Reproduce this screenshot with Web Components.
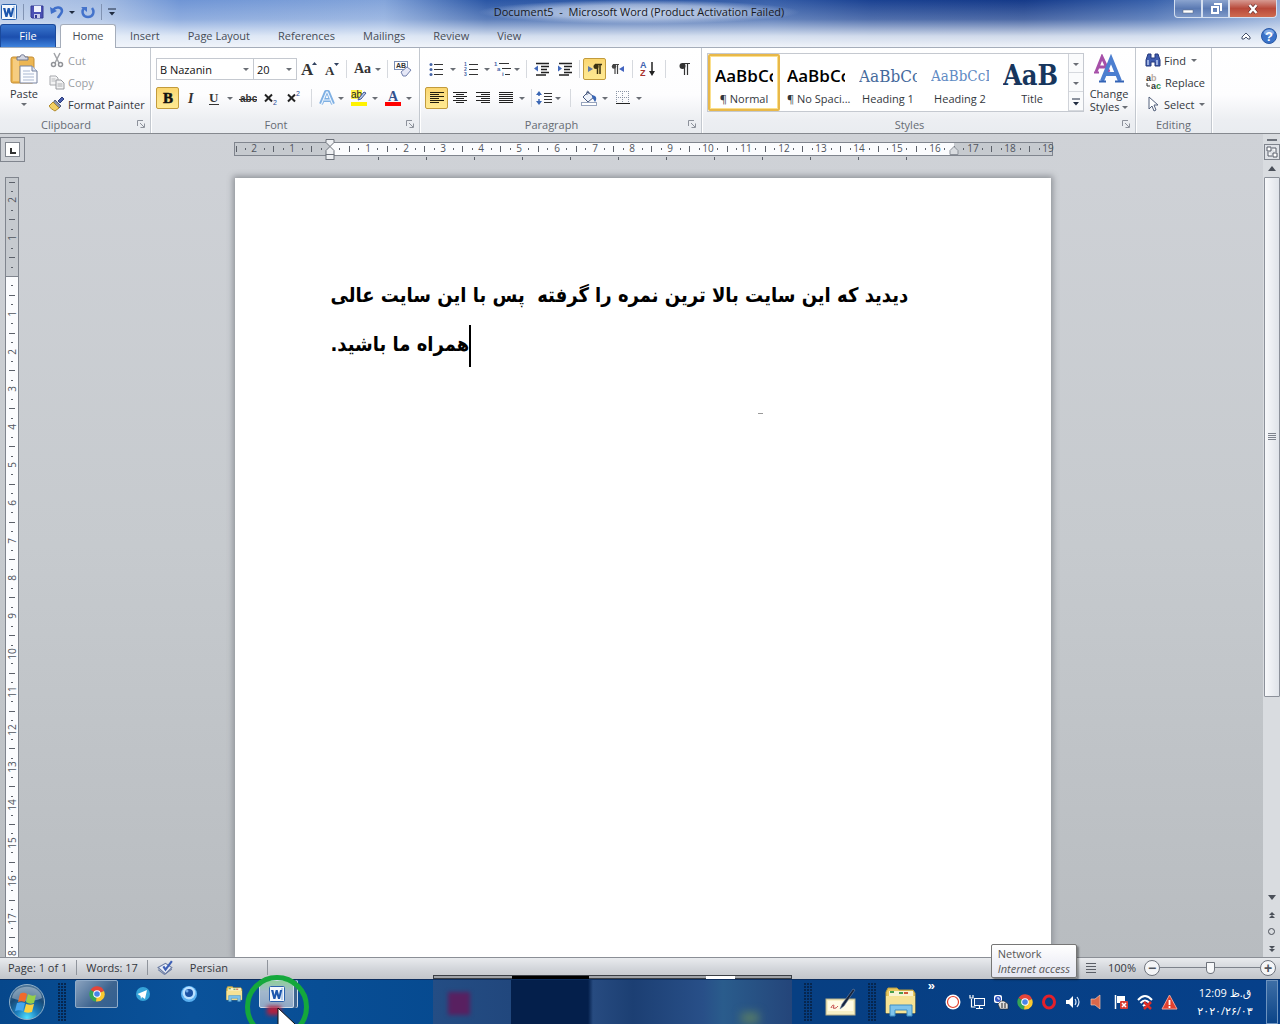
<!DOCTYPE html>
<html lang="en">
<head>
<meta charset="utf-8">
<title>Document5 - Microsoft Word</title>
<style>
  html, body {
    margin: 0;
    height: 100%;
    overflow: hidden;
  }
  body {
    font-family: "Open Sans", "Noto Sans", "DejaVu Sans", sans-serif;
    font-size: 11px;
    color: #33373d;
  }
</style>
</head>
<body>
<word-window></word-window>

<script>
const ICONS = {
  word: [16, 16, `<rect x=".5" y=".5" width="15" height="15" rx="1" fill="#f4f8fd" stroke="#2b62ad"/><rect x="12" y="2" width="2" height="12" fill="#b9cfec"/><path d="M2 4h2.400l1 5 1.300-5h2l1.300 5 1-5h2.200l-2.200 9H9L7.700 8.500 6.400 13h-2z" fill="#1c56ad"/>`],
  save: [14, 14, `<path d="M1 1h12v12H2l-1-1z" fill="#4a50b4" stroke="#343a92"/><rect x="4" y="1" width="7" height="6" fill="#eef1fb"/><rect x="4" y="9" width="6" height="4" fill="#c8cdea"/><rect x="5" y="10" width="2" height="3" fill="#343a92"/>`],
  undo: [14, 14, `<path d="M3 5c3-4 9-3 9 1 0 3-3 4-4 7" fill="none" stroke="#3f6fca" stroke-width="2.500"/><path d="M0 2l1 7 6-3z" fill="#3f6fca"/>`],
  redo: [14, 14, `<path d="M3 3c-3 4-1 9 4 9s7-5 4-9" fill="none" stroke="#4473cb" stroke-width="2.500"/><path d="M0 2h6v5z" fill="#4473cb"/>`],
  more: [8, 8, `<path d="M0 1h8" stroke="#1f2b40" stroke-width="1"/><path d="M1 4h6L4 7.500z" fill="#1f2b40"/>`],
  paste: [28, 30, `<rect x="1" y="3" width="23" height="26" rx="2" fill="#ecb652" stroke="#c58d33"/><rect x="3" y="5" width="6" height="22" fill="#f6cd80"/><path d="M7 6V3h3c0-3 5-3 5 0h3v3z" fill="#d3d6e2" stroke="#6f7690"/><path d="M10 12h12l5 5v12H10z" fill="#fbfcff" stroke="#7683a0"/><path d="M22 12v5h5" fill="#dce4f2" stroke="#7683a0"/><path d="M13 17h7M13 20h11M13 23h11M13 26h11" stroke="#a9b7d0"/>`],
  cut: [16, 16, `<path d="M5 1l5 10M11 1L6 11" stroke="#a2a4a8" stroke-width="1.500"/><circle cx="4.500" cy="12.500" r="2" fill="none" stroke="#909297" stroke-width="1.500"/><circle cx="11.500" cy="12.500" r="2" fill="none" stroke="#909297" stroke-width="1.500"/>`],
  copy: [16, 16, `<path d="M1 2h6l2 2v7H1z" fill="#f3f3f4" stroke="#a7a9ad"/><path d="M2.500 5h4M2.500 7h4" stroke="#b9bbbe"/><path d="M7 6h5l3 3v6H7z" fill="#f3f3f4" stroke="#989a9f"/><path d="M8.500 10h5M8.500 12h5" stroke="#a9abae"/>`],
  painter: [16, 16, `<path d="M9 5l4-4 2 2-4 4z" fill="#4a5fae" stroke="#2c3d7e"/><path d="M6 4l6 6-2 2-6-5z" fill="#8a93a8" stroke="#555e78"/><path d="M4 6l6 6-4 3c-2-1-5-3-6-5z" fill="#f3d064" stroke="#b18a2a"/>`],
  grow: [18, 16, `<text x="1" y="14" font-family="Liberation Serif" font-weight="700" font-size="17" fill="#333">A</text><path d="M12 4l2.500-3L17 4z" fill="#30415f"/>`],
  shrink: [18, 16, `<text x="2" y="14" font-family="Liberation Serif" font-weight="700" font-size="13" fill="#333">A</text><path d="M11 2h5l-2.500 3z" fill="#30415f"/>`],
  changecase: [18, 16, `<text x="1" y="12" font-family="Liberation Serif" font-weight="700" font-size="14" fill="#333">Aa</text>`],
  clear: [18, 18, `<rect x=".5" y="1.500" width="13" height="8" fill="#fff" stroke="#7d8fb5"/><text x="2" y="8" font-family="Liberation Sans" font-weight="700" font-size="7" fill="#333">AB</text><path d="M7 12l6-5 4 3-5 6H9z" fill="#e6e8f7" stroke="#7381ad"/>`],
  bold: [14, 14, `<text x="2" y="12" font-family="Liberation Serif" font-weight="700" font-size="15" fill="#111" stroke="#111" stroke-width=".5">B</text>`],
  italic: [14, 14, `<text x="4" y="12" font-family="Liberation Serif" font-weight="700" font-style="italic" font-size="14" fill="#333">I</text>`],
  underline: [14, 16, `<text x="2" y="12" font-family="Liberation Serif" font-weight="700" font-size="13" fill="#333">U</text><path d="M2 14.500h10" stroke="#333"/>`],
  strike: [18, 14, `<text x="1" y="11" font-family="Liberation Sans" font-weight="700" font-size="10" fill="#333">abc</text><path d="M0 8.500h18" stroke="#333"/>`],
  sub: [16, 16, `<path d="M2 4.500l7 7M9 4.500l-7 7" stroke="#222" stroke-width="2"/><text x="10" y="15" font-family="Liberation Sans" font-size="7" fill="#274b93">2</text>`],
  sup: [16, 16, `<path d="M2 4.500l7 7M9 4.500l-7 7" stroke="#222" stroke-width="2"/><text x="10" y="6" font-family="Liberation Sans" font-size="7" fill="#274b93">2</text>`],
  effects: [16, 16, `<path d="M2 14L7 2h2l5 12M4.500 10h7" fill="none" stroke="#7fb0e3" stroke-width="4" stroke-linejoin="round"/><path d="M2.500 14L7.500 2h1L13.500 14M5 10h6" fill="none" stroke="#eef6ff" stroke-width="1.200"/>`],
  highlight: [18, 18, `<rect x="1" y="1" width="11" height="9" fill="#fff34a"/><text x="1" y="9" font-family="Liberation Sans" font-size="10" fill="#222">ab</text><path d="M9 9l5-6 2 1-5 6-3 1z" fill="#b9c9ec" stroke="#405796"/><rect x="1" y="13" width="16" height="4" fill="#fff200"/>`],
  fontcolor: [18, 18, `<text x="4" y="12" font-family="Liberation Serif" font-weight="700" font-size="14" fill="#33518f">A</text><rect x="1" y="13" width="16" height="4" fill="#f00"/>`],
  bullets: [16, 14, `<g fill="#4565a8"><circle cx="2" cy="2.500" r="1.500"/><circle cx="2" cy="7.500" r="1.500"/><circle cx="2" cy="12.500" r="1.500"/></g><path d="M5 2.500h9M5 7.500h9M5 12.500h9" stroke="#333"/>`],
  numbers: [16, 14, `<g font-family="Liberation Sans" font-weight="700" font-size="5" fill="#4565a8"><text x="1" y="4">1</text><text x="1" y="9">2</text><text x="1" y="14">3</text></g><path d="M6 2.500h9M6 7.500h9M6 12.500h9" stroke="#333"/>`],
  levels: [17, 16, `<g font-family="Liberation Sans" font-weight="700" font-size="6" fill="#4565a8"><text x="0" y="5">1</text><text x="3" y="10">a</text><text x="8" y="15">i</text></g><path d="M5 2.500h10M8 7.500h9M11 13.500h5" stroke="#333"/>`],
  outdent: [16, 14, `<path d="M2 1.500h13M7 4.500h8M7 7.500h6M7 10.500h8M2 13h10" stroke="#222" stroke-width="1.500"/><path d="M0 6.500l4-3v6z" fill="#4269bb"/>`],
  indent: [16, 14, `<path d="M2 1.500h13M7 4.500h8M7 7.500h6M7 10.500h8M2 13h10" stroke="#222" stroke-width="1.500"/><path d="M5 6.500l-4-3v6z" fill="#4269bb"/>`],
  ltr: [14, 12, `<path d="M0 3v6l5-3z" fill="#5c77a6"/><path d="M9.500 1v10M12 1v10M7 1.500h7" fill="none" stroke="#3b3110" stroke-width="1.500"/><circle cx="8" cy="3.500" r="2.500" fill="#3b3110"/>`],
  rtl: [14, 12, `<path d="M13 3v6L8 6z" fill="#4465c0"/><path d="M4 1v10M6.500 1v10M2 1.500h6" fill="none" stroke="#444" stroke-width="1.200"/><circle cx="3" cy="3.500" r="2.200" fill="#444"/>`],
  sort: [16, 16, `<g font-family="Liberation Sans" font-weight="700" font-size="9"><text x="0" y="7" fill="#3d62b0">A</text><text x="0" y="15" fill="#a8322d">Z</text></g><path d="M12 1v12" stroke="#222" stroke-width="1.500"/><path d="M9 10h6l-3 5z" fill="#222"/>`],
  pilcrow: [12, 14, `<path d="M6.500 1v12M9.500 1v12M4 1.500h8" fill="none" stroke="#333" stroke-width="1.200"/><circle cx="4.500" cy="4" r="3" fill="#333"/>`],
  left: [14, 12, `<path d="M0 .5h14M0 2.500h9M0 4.500h14M0 6.500h9M0 8.500h14M0 10.500h9" stroke="#221d0c"/>`],
  center: [14, 12, `<path d="M0 .5h14M3 2.500h8M0 4.500h14M3 6.500h8M0 8.500h14M3 10.500h8" stroke="#222"/>`],
  right: [14, 12, `<path d="M0 .5h14M5 2.500h9M0 4.500h14M5 6.500h9M0 8.500h14M5 10.500h9" stroke="#222"/>`],
  justify: [14, 12, `<path d="M0 .5h14M0 2.500h14M0 4.500h14M0 6.500h14M0 8.500h14M0 10.500h14" stroke="#222"/>`],
  spacing: [16, 16, `<path d="M3 3v10" stroke="#3a66b4" stroke-width="1.500" stroke-dasharray="3 3"/><path d="M0 5l3-4 3 4zM0 11l3 4 3-4z" fill="#3a66b4"/><path d="M8 3.500h8M8 6.500h8M8 9.500h8M8 12.500h8" stroke="#333"/>`],
  shading: [18, 16, `<path d="M3 7l5-5 6 5-6 5z" fill="#eef2fa" stroke="#48597e"/><path d="M7 5c-1-5 2-5 2-1" fill="none" stroke="#48597e"/><path d="M12 5c5 1 5 4 3 7l-3-5z" fill="#3a66b4"/><rect x="1.500" y="12.500" width="15" height="3" fill="#fff" stroke="#97a4bd"/>`],
  borders: [14, 14, `<path d="M.5 0v13M6.500 0v13M12.500 0v13M0 .5h13M0 6.500h13" stroke="#8b95a5" stroke-dasharray="1 1"/><path d="M0 12.500h14" stroke="#222"/>`],
  styles: [32, 30, `<path d="M3 18L9 3l7 15M5 13h9" fill="none" stroke="#a650a8" stroke-width="3"/><path d="M1 18.500h5" stroke="#a650a8" stroke-width="2"/><path d="M9 27l9-22 9 22M12 20h12" fill="none" stroke="#4c7fd0" stroke-width="4"/><path d="M6 27.500h7M22 27.500h9" stroke="#3363b5" stroke-width="2"/>`],
  find: [16, 14, `<path d="M3 1h3v4h4V1h3l2 6v6h-5V9H6v4H1V7z" fill="#3f5cae" stroke="#25397d"/><path d="M3 7v5M12 7v5" stroke="#b9c9f0" stroke-width="1.500"/>`],
  replace: [17, 16, `<g font-family="Liberation Sans" font-weight="700" font-size="9"><text x="1" y="7" fill="#333">a</text><text x="6" y="7" fill="#b9a9a0">b</text><text x="6" y="15" fill="#333">a</text><text x="11" y="15" fill="#2a8b3c">c</text></g><path d="M2 9v3h3" fill="none" stroke="#333"/>`],
  select: [12, 16, `<path d="M2 1v12l3-3 2 5 2-1-2-5h4z" fill="#fff" stroke="#53617c"/>`],
  launcher: [8, 8, `<path d="M.5 6V.5H6" fill="none" stroke="#8c919b"/><path d="M3 3l4 4M7.500 3.500v4h-4" fill="none" stroke="#8c919b"/>`],
  help: [16, 16, `<circle cx="8" cy="8" r="7.500" fill="#3a73c9" stroke="#2a59a5"/><ellipse cx="8" cy="4.500" rx="5" ry="3" fill="#82aae4"/><text x="4" y="13" font-family="Liberation Sans" font-weight="700" font-size="13" fill="#fff">?</text>`],
  collapse: [10, 8, `<path d="M1 5l4-4 4 4v2H7L5 5 3 7H1z" fill="#fff" stroke="#44506a"/>`],
  minimize: [12, 12, `<rect x="1" y="7" width="10" height="3" fill="#fff" stroke="#56647f" stroke-width=".5"/>`],
  restore: [12, 12, `<path d="M4 1h7v7M2 4h6v6H2z" fill="none" stroke="#fff" stroke-width="2"/>`],
  close: [12, 12, `<path d="M2.500 2l7 8M9.500 2l-7 8" stroke="#5f2a2a" stroke-width="3.500"/><path d="M2.500 2l7 8M9.500 2l-7 8" stroke="#fff" stroke-width="2.500"/>`],
  proof: [16, 14, `<path d="M1 7l7-4 6 4-6 6z" fill="#e9eef8" stroke="#6c7da4"/><path d="M1 9l6 4.500 7-5" fill="none" stroke="#6c7da4"/><path d="M6 6l2 3 6-8" fill="none" stroke="#3d5fb5" stroke-width="2"/>`],
  outline: [10, 10, `<path d="M0 .5h10M0 3.500h10M0 6.500h10M0 9.500h10" stroke="#5a5e66"/>`],
  swap: [16, 16, `<rect x=".5" y=".5" width="15" height="15" fill="#dfe2e7" stroke="#7e838c"/><path d="M3 3h4v4H3zM9 9h4v4H9zM8 4h4v4M4 8v4h4" fill="#fff" stroke="#555b66"/>`],
  start: [38, 38, `<defs><radialGradient id="o" cx=".5" cy=".95" r=".9"><stop offset="0" stop-color="#4fe0ff"/><stop offset=".35" stop-color="#1c7fbe"/><stop offset=".7" stop-color="#174a78"/><stop offset="1" stop-color="#4c7496"/></radialGradient></defs><circle cx="19" cy="19" r="17.500" fill="url(#o)" stroke="#8fb0c9"/><path d="M4 15C6 0 32 0 34 15 24 20 12 18 4 15z" fill="#fff" opacity=".35"/><path d="M12 11c3-2 5-1 7 0l-2 8c-3-1-5-1-7 0z" fill="#ef6a2c"/><path d="M20 11c3 2 5 2 8 1l-2 8c-3 1-5 1-8-1z" fill="#95cf4b"/><path d="M9 20c3-1 5-1 8 0l-2 8c-3-1-5-1-8 0z" fill="#46a5ee"/><path d="M18 21c3 1 5 1 8 0l-2 8c-3 1-5 1-8 0z" fill="#fbd141"/>`],
  chrome: [16, 16, `<path d="M8 8L1.500 4A7.500 7.500 0 0 1 15 5z" fill="#e5453a"/><path d="M8 8L1.500 4A7.500 7.500 0 0 0 7 15.500z" fill="#35a455"/><path d="M8 8l7-3A7.500 7.500 0 0 1 7 15.500z" fill="#fbc92f"/><circle cx="8" cy="8" r="3.800" fill="#fff"/><circle cx="8" cy="8" r="2.800" fill="#4784e8"/>`],
  telegram: [16, 16, `<circle cx="8" cy="8" r="7" fill="#35a3d8"/><path d="M2.500 8L12 4l-2 9-3-2-1 2-.5-3z" fill="#fff"/>`],
  ball: [18, 18, `<circle cx="9" cy="9" r="8" fill="#5ab0f0"/><circle cx="9" cy="8" r="6.500" fill="#b9e0ff"/><circle cx="9" cy="8" r="4" fill="#1b52a4"/><circle cx="7" cy="6" r="1.500" fill="#6fa8e6"/>`],
  folder: [32, 30, `<path d="M1 5l2-4h9l2 2h14l2 3v20H1z" fill="#e8c85e" stroke="#b99a3f"/><path d="M4 4h24v5H4z" fill="#f9f3d2"/><path d="M5 5h4M14 6h4" stroke="#4aa04d" stroke-width="2"/><path d="M19 6h4" stroke="#d05a3a" stroke-width="2"/><path d="M1 9h29v17H1z" fill="#f6e294"/><path d="M5 29V18h22v11h-5v-6H10v6z" fill="#7fc4ec" stroke="#3f8ec3"/>`],
  tablet: [32, 28, `<rect x="1" y="11" width="29" height="16" fill="#f7f0c6" stroke="#b9b188"/><rect x="3" y="13" width="25" height="10" fill="#fffbe4"/><path d="M6 20c2-5 4-3 2 0 3 1 4-1 5-2" fill="none" stroke="#c04040"/><path d="M15 21l2-5L28 1l2 1-11 16z" fill="#16243c" stroke="#6b86ab" stroke-width=".6"/>`],
  record: [16, 16, `<circle cx="8" cy="8" r="7.500" fill="#fff"/><circle cx="8" cy="8" r="5.500" fill="#fff" stroke="#e2412c" stroke-width="1.200"/>`],
  network: [16, 16, `<rect x="5.500" y="4.500" width="10" height="7" fill="#17498f" stroke="#fff"/><path d="M7 14.500h7M10.500 12v2M2.500 5v8h4M1 1v3h3V1" fill="none" stroke="#fff" stroke-width="1.200"/>`],
  idm: [16, 16, `<rect x="1" y="1" width="8" height="8" rx="2" fill="#fff"/><circle cx="5" cy="5" r="3" fill="#3154c2"/><path d="M5 3v2h2" fill="none" stroke="#fff"/><path d="M5 10l3-3h3l4 3v5H7z" fill="#e2e2e2" stroke="#222" stroke-width=".6"/><path d="M9 9v5M12 9v5" stroke="#222"/>`],
  opera: [16, 16, `<ellipse cx="8" cy="8" rx="5.500" ry="6" fill="none" stroke="#e3202b" stroke-width="3"/>`],
  sound: [16, 16, `<path d="M1 6h3l4-4v12l-4-4H1z" fill="#fff"/><path d="M10 5q2 3 0 6M12 3q4 5 0 10" fill="none" stroke="#dce9fa" stroke-width="1.200"/>`],
  speaker: [16, 16, `<path d="M2 5h4l5-4v14l-5-4H2z" fill="#d9684b" stroke="#f0c3b0" stroke-width=".7"/>`],
  flag: [16, 16, `<path d="M2.500 1v14" stroke="#fff" stroke-width="1.500"/><path d="M4 2h8v7H4z" fill="#fff"/><rect x="7" y="7" width="8" height="8" rx="1" fill="#d93c32"/><path d="M9 9l4 4M13 9l-4 4" stroke="#fff" stroke-width="1.500"/>`],
  wifi: [16, 16, `<path d="M1 6q7-8 14 0M3.500 9q4.500-5 9 0M6 12q2-2 4 0" fill="none" stroke="#fff" stroke-width="2"/><path d="M7 8l7 7M14 8l-7 7" stroke="#e02d25" stroke-width="2.500"/>`],
  warning: [17, 16, `<path d="M8.500 1L16 15H1z" fill="#e2412f" stroke="#f1a094"/><path d="M8.500 6v5M8.500 12v2" stroke="#fff" stroke-width="1.800"/>`]
};

class uiIcon extends HTMLElement {
  constructor() {
    super();
    this.attachShadow({ mode: "open" });
    const [w, h, body] = ICONS[this.getAttribute("name")];
    const size = Number(this.getAttribute("width")) || w;
    this.shadowRoot.innerHTML = `
      <style>
        :host { display: inline-flex; flex: none; }
        svg { display: block; }
      </style>
      <svg width="${size}" height="${Math.round((h * size) / w)}" viewBox="0 0 ${w} ${h}" aria-hidden="true">${body}</svg>
    `;
  }
}
customElements.define("ui-icon", uiIcon);

// one ribbon button; "menu" adds the small drop-down arrow
class toolButton extends HTMLElement {
  constructor() {
    super();
    this.attachShadow({ mode: "open" });
    const icon = this.getAttribute("icon");
    this.shadowRoot.innerHTML = `
      <style>
        :host { display: flex; flex: none; }
        button {
          display: flex; align-items: center; gap: 3px;
          height: 22px; padding: 0; border: 1px solid transparent; border-radius: 2px;
          background: none; font: inherit; color: inherit; white-space: nowrap; box-sizing: border-box;
        }
        .pic { display: flex; justify-content: center; min-width: 21px; }
        :host([label]) .pic { min-width: 16px; }
        :host([narrow]) .pic { min-width: 16px; }
        :host([on]) button {
          border-color: #c29b3c;
          background: linear-gradient(#fbd66f, #fce28a 50%, #ffe98f);
        }
        :host([menu]) button { gap: 1px; }
        :host([menu][label]) button { gap: 3px; }
        :host([off]) { color: #9a9da2; }
        i { display: block; margin: 0 2px; border: 3px solid transparent; border-top-color: #6a6e75; border-bottom: 0; }
      </style>
      <button type="button" aria-label="${this.getAttribute("label") || icon}">
        <span class="pic"><ui-icon name="${icon}"></ui-icon></span><slot></slot>${this.hasAttribute("menu") ? "<i></i>" : ""}
      </button>
    `;
  }
}
customElements.define("tool-button", toolButton);

class toolSep extends HTMLElement {
  constructor() {
    super();
    this.attachShadow({ mode: "open" });
    this.shadowRoot.innerHTML = `
      <style>
        :host { display: block; flex: none; width: 1px; height: 18px; margin: 2px 3px; background: #d6d9de; }
        :host([wide]) { margin: 2px 6px; }
      </style>
    `;
  }
}
customElements.define("tool-sep", toolSep);

class ribbonGroup extends HTMLElement {
  constructor() {
    super();
    this.attachShadow({ mode: "open" });
    const title = this.getAttribute("name");
    this.shadowRoot.innerHTML = `
      <style>
        :host {
          display: flex; flex-direction: column; flex: none; box-sizing: border-box;
          height: 85px; border-right: 1px solid #c3c8cf; box-shadow: 1px 0 #fff;
        }
        .body { flex: 1; display: flex; min-height: 0; }
        footer {
          display: flex; align-items: center; height: 18px; padding: 0 5px; color: #666b73;
        }
        span { flex: 1; text-align: center; }
        :host(:not([plain])) span { padding-right: 10px; }
      </style>
      <div class="body"><slot></slot></div>
      <footer><span>${title}</span>${this.hasAttribute("plain") ? "" : '<ui-icon name="launcher"></ui-icon>'}</footer>
    `;
  }
}
customElements.define("ribbon-group", ribbonGroup);

class styleCard extends HTMLElement {
  constructor() {
    super();
    this.attachShadow({ mode: "open" });
    this.shadowRoot.innerHTML = `
      <style>
        :host { display: block; flex: none; width: 72px; }
        button {
          width: 100%; height: 57px; box-sizing: border-box; padding: 4px 5px 0; border: 2px solid transparent;
          background: none; font: inherit; color: inherit; text-align: center;
        }
        :host([on]) button { border-color: #e8b84a; box-shadow: inset 0 0 0 1px #fbe08d; border-radius: 2px; }
        .sample {
          display: block; height: 28px; line-height: 28px; overflow: hidden; white-space: nowrap; text-align: left;
          font-family: var(--face, inherit); font-size: var(--size, 17px); font-weight: var(--weight, 600);
          color: var(--ink, #000);
        }
        .name { display: block; line-height: 18px; white-space: nowrap; }
      </style>
      <button type="button"><span class="sample">${this.getAttribute("sample")}</span><span class="name"><slot></slot></span></button>
    `;
  }
}
customElements.define("style-card", styleCard);

class titleBar extends HTMLElement {
  constructor() {
    super();
    this.attachShadow({ mode: "open" });
    this.shadowRoot.innerHTML = `
      <style>
        :host { display: flex; justify-content: space-between; height: 24px; }
        button { padding: 0; border: 0; background: none; display: flex; align-items: center; justify-content: center; }
        .side { flex: 1; display: flex; align-items: center; gap: 6px; padding-left: 1px; }
        .line { width: 1px; height: 16px; background: #8193b3; }
        .tight { margin-left: -1px; border: 3px solid transparent; border-top-color: #1f2b40; border-bottom: 0; }
        h1 {
          margin: 0; padding: 0 16px; font: inherit; line-height: 24px; color: #17191d; white-space: pre;
          background: radial-gradient(closest-side, rgba(235,242,252,.75), rgba(235,242,252,.5) 60%, rgba(235,242,252,0));
        }
        .win { flex: 1; display: flex; justify-content: flex-end; align-items: flex-start; padding-right: 3px; }
        .win button { height: 18px; width: 27px; border: 1px solid #d4dff0; border-top: 0; background: linear-gradient(#8ba4cf, #5b7ab3 50%, #7e99c8); box-sizing: border-box; }
        .win button:first-child { width: 28px; border-radius: 0 0 0 4px; }
        .win button:last-child { width: 48px; border-radius: 0 0 4px 0; background: linear-gradient(#d79a92, #b8493a 50%, #cf6b50); }
      </style>
      <div class="side">
        <ui-icon name="word"></ui-icon><span class="line"></span>
        <button aria-label="Save"><ui-icon name="save"></ui-icon></button>
        <button aria-label="Undo"><ui-icon name="undo"></ui-icon></button><span class="tight"></span>
        <button aria-label="Redo"><ui-icon name="redo"></ui-icon></button><span class="line"></span>
        <button aria-label="Customize"><ui-icon name="more"></ui-icon></button>
      </div>
      <h1>Document5  -  Microsoft Word (Product Activation Failed)</h1>
      <div class="win">
        <button aria-label="Minimize"><ui-icon name="minimize"></ui-icon></button>
        <button aria-label="Restore"><ui-icon name="restore"></ui-icon></button>
        <button aria-label="Close"><ui-icon name="close"></ui-icon></button>
      </div>
    `;
  }
}
customElements.define("title-bar", titleBar);

class ribbonTabs extends HTMLElement {
  constructor() {
    super();
    this.attachShadow({ mode: "open" });
    const tabs = ["Insert", "Page Layout", "References", "Mailings", "Review", "View"];
    this.shadowRoot.innerHTML = `
      <style>
        :host { display: flex; align-items: flex-end; height: 24px; border-bottom: 1px solid #a5adba; box-sizing: border-box; }
        button { height: 23px; padding: 0 14px; border: 0; background: none; font: inherit; color: #464c56; white-space: nowrap; }
        .file {
          width: 56px; padding: 0 0 1px; margin-right: 4px; color: #fff; border: 1px solid #1b4a9c; border-bottom: 0;
          border-radius: 3px 3px 0 0; background: linear-gradient(#3a76cd, #1c4fae 55%, #3f83dd);
        }
        .home {
          width: 56px; padding: 0 0 2px; height: 24px; margin-bottom: -1px; border: 1px solid #a5adba; border-bottom: 0;
          border-radius: 3px 3px 0 0; background: #fff;
        }
        .end { margin-left: auto; display: flex; align-items: center; align-self: center; gap: 10px; padding-right: 3px; }
        .end button { padding: 0; height: 16px; }
      </style>
      <button class="file">File</button><button class="home">Home</button>
      ${tabs.map((t) => `<button>${t}</button>`).join("")}
      <div class="end">
        <button aria-label="Minimize the Ribbon"><ui-icon name="collapse"></ui-icon></button>
        <button aria-label="Help"><ui-icon name="help"></ui-icon></button>
      </div>
    `;
  }
}
customElements.define("ribbon-tabs", ribbonTabs);

class wordRibbon extends HTMLElement {
  constructor() {
    super();
    this.attachShadow({ mode: "open" });
    this.shadowRoot.innerHTML = `
      <style>
        :host {
          display: flex; height: 85px; border-bottom: 1px solid #85898f;
          background: linear-gradient(#fff, #fdfdfe 55%, #eceef2 85%, #e9ecf0);
        }
        .clip { width: 151px; }
        .font { width: 269px; }
        .para { width: 282px; }
        .sty { width: 434px; }
        .edit { width: 76px; }
        .big {
          display: flex; flex-direction: column; align-items: center; gap: 3px; padding: 0; border: 0;
          background: none; font: inherit; color: inherit; line-height: 13px;
        }
        .paste { width: 48px; padding-top: 6px; }
        .change { width: 50px; padding-top: 6px; }
        .big b { font-weight: 400; }
        .caret { display: inline-block; vertical-align: 2px; border: 3px solid transparent; border-top-color: #6a6e75; border-bottom: 0; }
        .stack { display: flex; flex-direction: column; padding-top: 1px; }
        .edit .stack { padding-left: 8px; }
        .rows { display: flex; flex-direction: column; gap: 7px; padding: 10px 0 0 5px; }
        .row { display: flex; }
        select {
          appearance: none; height: 22px; box-sizing: border-box; margin: 0; padding: 0 0 0 3px; border: 1px solid #c5c9d0;
          border-radius: 0; font: inherit; color: #111; width: 98px; background: #fff;
        }
        .combo { position: relative; display: flex; }
        .combo .caret { position: absolute; right: 5px; top: 10px; }
        .combo + .combo select { width: 44px; margin-left: -1px; }
        .gallery { display: flex; height: 59px; margin: 5px 0 0 5px; border: 1px solid #c5c9d0; background: #fff; box-sizing: border-box; }
        .scroll { display: flex; flex-direction: column; border-left: 1px solid #d0d3d9; width: 14px; }
        .scroll button { flex: 1; padding: 0; border: 0; border-bottom: 1px solid #d6d9de; background: #fafbfc; }
      </style>

      <ribbon-group class="clip" name="Clipboard">
        <button class="big paste"><ui-icon name="paste"></ui-icon><b>Paste</b><span class="caret"></span></button>
        <div class="stack">
          <tool-button icon="cut" label="Cut" off>Cut</tool-button>
          <tool-button icon="copy" label="Copy" off>Copy</tool-button>
          <tool-button icon="painter" label="Format Painter">Format Painter</tool-button>
        </div>
      </ribbon-group>

      <ribbon-group class="font" name="Font">
        <div class="rows">
          <div class="row">
            <span class="combo"><select aria-label="Font"><option>B Nazanin</option></select><span class="caret"></span></span>
            <span class="combo"><select aria-label="Font size"><option>20</option></select><span class="caret"></span></span>
            <tool-button icon="grow"></tool-button><tool-button icon="shrink"></tool-button><tool-sep></tool-sep>
            <tool-button icon="changecase" menu></tool-button><tool-sep></tool-sep>
            <tool-button icon="clear"></tool-button>
          </div>
          <div class="row">
            <tool-button icon="bold" on></tool-button><tool-button icon="italic"></tool-button>
            <tool-button icon="underline" menu></tool-button><tool-button icon="strike"></tool-button>
            <tool-button icon="sub"></tool-button><tool-button icon="sup"></tool-button><tool-sep wide></tool-sep>
            <tool-button icon="effects" menu narrow></tool-button><tool-button icon="highlight" menu></tool-button>
            <tool-button icon="fontcolor" menu></tool-button>
          </div>
        </div>
      </ribbon-group>

      <ribbon-group class="para" name="Paragraph">
        <div class="rows">
          <div class="row">
            <tool-button icon="bullets" menu></tool-button><tool-button icon="numbers" menu></tool-button>
            <tool-button icon="levels" menu narrow></tool-button><tool-sep></tool-sep>
            <tool-button icon="outdent"></tool-button><tool-button icon="indent"></tool-button><tool-sep></tool-sep>
            <tool-button icon="ltr" on></tool-button><tool-button icon="rtl"></tool-button><tool-sep></tool-sep>
            <tool-button icon="sort"></tool-button><tool-sep wide></tool-sep><tool-button icon="pilcrow"></tool-button>
          </div>
          <div class="row">
            <tool-button icon="left" on></tool-button><tool-button icon="center"></tool-button>
            <tool-button icon="right"></tool-button><tool-button icon="justify" menu></tool-button><tool-sep></tool-sep>
            <tool-button icon="spacing" menu narrow></tool-button><tool-sep wide></tool-sep>
            <tool-button icon="shading" menu></tool-button><tool-button icon="borders" menu></tool-button>
          </div>
        </div>
      </ribbon-group>

      <ribbon-group class="sty" name="Styles">
        <div class="gallery">
          <style-card sample="AaBbCc" on>¶ Normal</style-card>
          <style-card sample="AaBbCc">¶ No Spaci...</style-card>
          <style-card sample="AaBbCc" style="--face: 'DejaVu Serif Condensed', 'DejaVu Serif', serif; --weight: 400; --ink: #456a9c">Heading 1</style-card>
          <style-card sample="AaBbCcI" style="--face: 'DejaVu Serif Condensed', 'DejaVu Serif', serif; --weight: 400; --size: 15px; --ink: #5f8bc4">Heading 2</style-card>
          <style-card sample="AaB" style="--face: 'DejaVu Serif Condensed', 'DejaVu Serif', serif; --weight: 700; --size: 27px; --ink: #17365d">Title</style-card>
          <div class="scroll">
            <button aria-label="Up"><span class="caret"></span></button>
            <button aria-label="Down"><span class="caret"></span></button>
            <button aria-label="More"><ui-icon name="more"></ui-icon></button>
          </div>
        </div>
        <button class="big change"><ui-icon name="styles"></ui-icon><b>Change<br>Styles <span class="caret"></span></b></button>
      </ribbon-group>

      <ribbon-group class="edit" name="Editing" plain>
        <div class="stack">
          <tool-button icon="find" label="Find" menu>Find</tool-button>
          <tool-button icon="replace" label="Replace">Replace</tool-button>
          <tool-button icon="select" label="Select" menu>Select</tool-button>
        </div>
      </ribbon-group>
    `;
  }
}
customElements.define("word-ribbon", wordRibbon);

// centimetre ruler, drawn along x or, with "vertical", down the window
class wordRuler extends HTMLElement {
  constructor() {
    super();
    this.attachShadow({ mode: "open" });
    const vertical = this.hasAttribute("vertical");
    const zero = Number(this.getAttribute("zero"));
    const end = Number(this.getAttribute("end"));
    const length = vertical ? Math.max(window.innerHeight - 244, 100) : Number(this.getAttribute("length"));
    const quarter = 96 / 2.54 / 4;
    let marks = "";
    for (let q = -Math.floor(zero / quarter); zero + q * quarter < length; q++) {
      const p = Math.round(zero + q * quarter);
      if (q === 0) continue;
      const n = Math.abs(q / 4);
      const spot = (a, b) => (vertical ? `${b},${a}` : `${a},${b}`);
      if (q % 4 === 0) {
        const at = vertical ? `x="7" y="${p}" transform="rotate(-90 7 ${p})" dy="4"` : `x="${p}" y="10"`;
        marks += `<text ${at} text-anchor="middle">${n}</text>`;
      } else {
        const half = q % 2 === 0 ? 3 : 1;
        marks += `<path d="M${spot(p + 0.5, 7 - half)}L${spot(p + 0.5, 7 + half)}" stroke="#5c616a"/>`;
      }
    }
    const w = vertical ? 14 : length;
    const h = vertical ? length : 14;
    const white = vertical
      ? `<rect x="1" y="${zero + 1}" width="12" height="${length - zero}" fill="#fbfcfe"/><path d="M0 ${zero}.5h14" stroke="#80858e"/>`
      : `<rect x="${zero}" y="1" width="${end - zero}" height="12" fill="#fbfcfe"/>`;
    let extras = "";
    if (!vertical) {
      for (let x = zero + 48; x < end; x += 48) extras += `<path d="M${x}.5 15v3" stroke="#5c616a"/>`;
      extras += `
        <path d="M${zero - 4} -2.500h8v3l-4 4-4-4zM${zero - 4} 12.500v-4l4-4 4 4v4z" fill="#eef0f3" stroke="#6d727b"/>
        <rect x="${zero - 4}" y="12.500" width="8" height="5" fill="#eef0f3" stroke="#6d727b"/>
        <path d="M${end - 4} 12.500v-4l4-4 4 4v4z" fill="#d9dce0" stroke="#8d929a"/>`;
    }
    this.shadowRoot.innerHTML = `
      <style>
        :host { display: block; overflow: ${vertical ? "hidden" : "visible"}; }
        svg { display: block; overflow: visible; }
        text { font-size: 10px; fill: #4f545d; }
      </style>
      <svg width="${w}" height="${h}">
        <rect x=".5" y=".5" width="${w - 1}" height="${h - 1}" fill="#c6cacf" stroke="#80858e"/>
        ${white}${marks}${extras}
      </svg>
    `;
  }
}
customElements.define("word-ruler", wordRuler);

class scrollRail extends HTMLElement {
  constructor() {
    super();
    this.attachShadow({ mode: "open" });
    this.shadowRoot.innerHTML = `
      <style>
        :host { display: flex; flex-direction: column; align-items: center; background: #d9dce0; padding-top: 5px; box-sizing: border-box; }
        .split { width: 10px; height: 2px; background: #6d727b; margin-bottom: 2px; }
        button { padding: 0; border: 0; background: none; width: 16px; height: 17px; display: flex; flex-direction: column; align-items: center; justify-content: center; }
        .up { border: 4px solid transparent; border-bottom: 5px solid #4b5059; border-top: 0; }
        .down { border: 4px solid transparent; border-top: 5px solid #4b5059; border-bottom: 0; }
        .small { border-left-width: 3px; border-right-width: 3px; border-top-width: 0; border-bottom-width: 3px; }
        .small.down { border-top-width: 3px; border-bottom-width: 0; }
        .ball { width: 5px; height: 5px; border: 1px solid #4b5059; border-radius: 50%; }
        .track { flex: 1; width: 16px; }
        .thumb {
          height: 73%; box-sizing: border-box; border: 1px solid #8c919a; border-radius: 1px;
          background: linear-gradient(90deg, #f8f9fb, #dfe3e9);
          display: flex; align-items: center; justify-content: center;
        }
        .thumb::before { content: ""; width: 8px; height: 7px; background: repeating-linear-gradient(#7d828c 0 1px, transparent 1px 2px); }
      </style>
      <span class="split"></span>
      <button aria-label="View Ruler"><ui-icon name="swap"></ui-icon></button>
      <button aria-label="Scroll up"><span class="up"></span></button>
      <div class="track"><div class="thumb"></div></div>
      <button aria-label="Scroll down"><span class="down"></span></button>
      <button aria-label="Previous page"><span class="up small"></span><span class="up small"></span></button>
      <button aria-label="Browse"><span class="ball"></span></button>
      <button aria-label="Next page"><span class="down small"></span><span class="down small"></span></button>
    `;
  }
}
customElements.define("scroll-rail", scrollRail);

class wordWorkspace extends HTMLElement {
  constructor() {
    super();
    this.attachShadow({ mode: "open" });
    this.shadowRoot.innerHTML = `
      <style>
        :host {
          display: grid; grid-template: 43px minmax(0, 1fr) / 26px minmax(0, 1fr) 17px; overflow: hidden;
          background: linear-gradient(#cfd2d7, #c6cace 50%, #b8bcc0);
        }
        .tab { width: 25px; height: 25px; margin-top: 3px; box-sizing: border-box; border: 1px solid #80858e; padding: 4px; }
        .tab button { display: block; width: 15px; height: 15px; padding: 0; border: 1px solid #80858e; background: #fff; }
        .tab button::before { content: ""; display: block; width: 4px; height: 4px; margin: 2px 0 0 4px; border: solid #333; border-width: 0 0 2px 2px; }
        .top { justify-self: center; width: 819px; margin: 8px 3px 0 0; }
        scroll-rail { grid-column: 3; grid-row: 1 / 3; }
        .side { margin-left: 5px; }
        main {
          width: 816px; box-sizing: border-box; padding: 93px 96px 0; justify-self: center; margin: 1px 4px 0 0;
          background: #fff; box-shadow: 0 0 6px 2px #8f9398;
        }
        p {
          margin: 0; text-align: left; font-family: "DejaVu Sans Condensed", "DejaVu Sans", sans-serif; font-weight: 700;
          font-size: 20px; line-height: 49px; color: #000; white-space: pre;
        }
        .caret { display: inline-block; width: 2px; height: 42px; background: #000; vertical-align: middle; }
        .speck { margin: 44px 0 0 427px; width: 5px; height: 1px; background: #999; }
      </style>
      <div class="tab"><button aria-label="Left tab"></button></div>
      <word-ruler class="top" zero="96" end="720" length="819"></word-ruler>
      <scroll-rail></scroll-rail>
      <word-ruler class="side" vertical zero="99"></word-ruler>
      <main>
        <p lang="fa" dir="rtl">دیدید که این سایت بالا ترین نمره را گرفته  پس با این سایت عالی</p>
        <p lang="fa" dir="rtl"><span class="caret"></span>همراه ما باشید.</p>
        <div class="speck"></div>
      </main>
    `;
  }
}
customElements.define("word-workspace", wordWorkspace);

class statusBar extends HTMLElement {
  constructor() {
    super();
    this.attachShadow({ mode: "open" });
    this.shadowRoot.innerHTML = `
      <style>
        :host {
          display: flex; align-items: center; height: 22px; box-sizing: border-box; position: relative;
          border-top: 1px solid #8b8f96; background: linear-gradient(#e9ebee, #d3d6db 50%, #c2c5ca); padding: 0 4px 2px 8px;
        }
        .line { width: 1px; height: 15px; margin: 0 9px; background: #8f949c; }
        .lang { padding: 0 30px 0 16px; }
        .zoom { margin-left: auto; display: flex; align-items: center; }
        label { padding: 0 8px 0 12px; }
        button {
          width: 16px; height: 16px; padding: 0; border: 1px solid #6e737c; border-radius: 50%; background: #f4f5f7;
          font: 700 14px/12px "Liberation Sans", sans-serif; color: #50555e;
        }
        input { appearance: none; width: 100px; height: 16px; margin: 0; background: linear-gradient(#7d828b, #7d828b) center / 100% 1px no-repeat; }
        input::-webkit-slider-thumb {
          appearance: none; width: 9px; height: 12px; border: 1px solid #6e737c; border-radius: 1px 1px 5px 5px; background: #f7f8fa;
        }
        /* top edge of the overlay that stands behind the taskbar */
        .edge { position: absolute; left: 433px; bottom: 0; width: 359px; height: 4px; box-sizing: border-box; border: 1px solid #3b3f45; background: #9fa2a7; }
        .edge::before { content: ""; display: block; height: 3px; background: linear-gradient(90deg, transparent 78px, #000 78px 155px, transparent 155px 272px, #fff 272px 301px, transparent 301px); }
      </style>
      <span>Page: 1 of 1</span><span class="line"></span><span>Words: 17</span><span class="line"></span>
      <ui-icon name="proof" width="17"></ui-icon><span class="lang">Persian</span><span class="line"></span>
      <div class="edge"></div>
      <div class="zoom">
        <ui-icon name="outline"></ui-icon>
        <label for="zoom">100%</label>
        <button aria-label="Zoom out">−</button>
        <input id="zoom" type="range" min="0" max="200" value="100">
        <button aria-label="Zoom in">+</button>
      </div>
    `;
  }
}
customElements.define("status-bar", statusBar);

class taskBar extends HTMLElement {
  constructor() {
    super();
    this.attachShadow({ mode: "open" });
    const tray = ["record", "network", "idm", "chrome", "opera", "sound", "speaker", "flag", "wifi", "warning"];
    this.shadowRoot.innerHTML = `
      <style>
        :host {
          display: flex; align-items: center; height: 45px; position: relative; color: #fff; box-sizing: border-box;
          border-top: 1px solid #0b2e60;
          background: linear-gradient(90deg, #06478b, #0a529a 15%, #064a90 35%, #073f82 62%, #06408a 100%);
        }
        button { padding: 0; border: 0; background: none; display: flex; align-items: center; justify-content: center; }
        .start { width: 38px; height: 38px; margin: 0 12px 0 8px; }
        .grip { width: 9px; height: 38px; background: radial-gradient(circle at 1px 1px, #06264f 1px, transparent 1px) 0 0 / 3px 3px; }
        .apps { display: flex; align-self: flex-start; margin-left: 8px; gap: 3px; }
        .apps button { width: 43px; height: 28px; border: 1px solid transparent; border-radius: 2px; box-sizing: border-box; }
        .apps .open { border-color: #8fabc9; background: linear-gradient(135deg, #8ba3bf, #3d648f 60%, #315f92); }
        .apps .word { width: 35px; border-color: #cfdbe8; background: linear-gradient(#8fce9c, #a3b8cc 40%, #8fa9c6); box-shadow: 3px 0 #3d648f, 4px 0 #cfdbe8; }
        .glass {
          position: absolute; left: 433px; top: 0; width: 359px; height: 100%;
          background: linear-gradient(90deg, #244d84, #21477d 78px, #041f4b 78px 155px, #274b80 160px, #1c3f73 200px, #284f88 270px, #2a5c8c 290px, #24457a);
        }
        .glass::before { content: ""; position: absolute; left: 15px; top: 12px; width: 22px; height: 23px; background: #582060; filter: blur(2px); }
        .glass::after { content: ""; position: absolute; left: 308px; bottom: 0; width: 18px; height: 12px; background: #52786a; filter: blur(4px); }
        .tools { margin-left: auto; display: flex; align-items: center; }
        .tools .grip { margin-right: 12px; }
        .tools .tablet { margin-right: 11px; }
        .tools .shelf { margin-left: -4px; }
        .chev { align-self: flex-start; margin: 0 10px 0 11px; font: 700 13px/12px "Liberation Sans", sans-serif; }
        .tray { display: flex; gap: 8px; }
        time { display: block; width: 80px; margin-left: 7px; text-align: center; line-height: 18px; font-family: "Open Sans", "DejaVu Sans", sans-serif; }
        time span { display: block; }
        .desk { width: 12px; height: 44px; margin: 0 2px 0 1px; border: 1px solid #6d93bf; background: linear-gradient(#3d6ea6, #0b4488); box-sizing: border-box; }
        .clip { position: absolute; inset: -9px 0 0; overflow: hidden; pointer-events: none; }
        .ring { position: absolute; left: 245px; top: 4px; width: 64px; height: 64px; box-sizing: border-box; border: 5px solid #14a83c; border-radius: 50%; }
        .dot { position: absolute; left: 267px; top: 35px; width: 14px; height: 9px; background: #b3203e; filter: blur(2px); }
        .pointer { position: absolute; left: 277px; top: 36px; }
        .tip {
          position: absolute; right: 203px; bottom: 46px; padding: 1px 6px; box-sizing: border-box; border: 1px solid #767676; border-radius: 2px;
          background: linear-gradient(#fff, #e4e5f0); color: #575757; line-height: 15px; box-shadow: 2px 2px 2px rgba(0,0,0,.35);
          white-space: nowrap;
        }
        .tip em { display: block; }
      </style>
      <button class="start" aria-label="Start"><ui-icon name="start"></ui-icon></button>
      <span class="grip"></span>
      <nav class="apps">
        <button class="open" aria-label="Chrome"><ui-icon name="chrome"></ui-icon></button>
        <button aria-label="Telegram"><ui-icon name="telegram"></ui-icon></button>
        <button aria-label="Browser"><ui-icon name="ball"></ui-icon></button>
        <button aria-label="Explorer"><ui-icon name="folder" width="17"></ui-icon></button>
        <button class="word" aria-label="Word"><ui-icon name="word"></ui-icon></button>
      </nav>
      <div class="glass"></div>
      <div class="tools">
        <span class="grip"></span>
        <button class="tablet" aria-label="Input Panel"><ui-icon name="tablet"></ui-icon></button>
        <span class="grip"></span>
        <button class="shelf" aria-label="Libraries"><ui-icon name="folder"></ui-icon></button>
        <span class="chev">»</span>
        <div class="tray">${tray.map((n) => `<ui-icon name="${n}"></ui-icon>`).join("")}</div>
        <time><span dir="rtl">ق.ظ 12:09</span><span>۲۰۲۰/۲۶/۰۳</span></time>
        <button class="desk" aria-label="Show desktop"></button>
      </div>
      <div class="clip">
        <div class="ring"></div><div class="dot"></div>
        <svg class="pointer" width="18" height="26"><path d="M1 1v25h17V17z" fill="#fff" stroke="#111"/></svg>
      </div>
      <div class="tip" role="tooltip">Network<em>Internet access</em></div>
    `;
  }
}
customElements.define("task-bar", taskBar);

class wordWindow extends HTMLElement {
  constructor() {
    super();
    this.attachShadow({ mode: "open" });
    this.shadowRoot.innerHTML = `
      <style>
        :host { display: flex; flex-direction: column; height: 100vh; }
        header {
          background:
            linear-gradient(rgba(240,245,251,0), rgba(240,245,251,.25) 40%, rgba(240,245,251,.85) 75%, #f2f5fa),
            linear-gradient(90deg, #b4c7e6, #a3bbe2 8%, #6f95d5 14%, #83a4da 30%, #2a56a5 38%, #375fa9 60%, #1b4292 68%, #153a89 80%, #3861ab 90%, #8aa7d6);
        }
        word-workspace { flex: 1; min-height: 0; }
      </style>
      <header><title-bar></title-bar><ribbon-tabs></ribbon-tabs></header>
      <word-ribbon></word-ribbon>
      <word-workspace></word-workspace>
      <status-bar></status-bar>
      <task-bar></task-bar>
    `;
  }
}
customElements.define("word-window", wordWindow);
</script>
</body>
</html>
